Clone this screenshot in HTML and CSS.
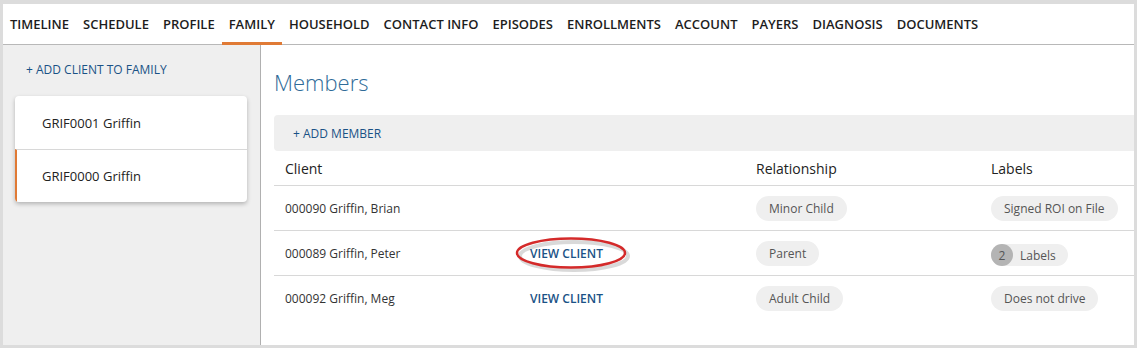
FILE: index.html
```html
<!DOCTYPE html>
<html lang="en">
<head>
  <meta charset="UTF-8">
  <title>Family - Members</title>
  <link rel="stylesheet" href="styles.css">
</head>
<body>
  <div class="frame">
    <!-- Top tabs -->
    <nav class="tabs">
      <a href="#" class="tab">TIMELINE</a>
      <a href="#" class="tab">SCHEDULE</a>
      <a href="#" class="tab">PROFILE</a>
      <a href="#" class="tab active">FAMILY</a>
      <a href="#" class="tab">HOUSEHOLD</a>
      <a href="#" class="tab">CONTACT INFO</a>
      <a href="#" class="tab">EPISODES</a>
      <a href="#" class="tab">ENROLLMENTS</a>
      <a href="#" class="tab">ACCOUNT</a>
      <a href="#" class="tab">PAYERS</a>
      <a href="#" class="tab">DIAGNOSIS</a>
      <a href="#" class="tab">DOCUMENTS</a>
    </nav>

    <div class="content">
      <!-- Families list -->
      <aside class="sidebar">
        <a href="#" class="link add-family">+ ADD CLIENT TO FAMILY</a>
        <div class="family-card">
          <div class="family-item">GRIF0001 Griffin</div>
          <div class="family-item selected">GRIF0000 Griffin</div>
        </div>
      </aside>

      <!-- Members -->
      <main class="main">
        <h1>Members</h1>
        <div class="toolbar">
          <a href="#" class="link">+ ADD MEMBER</a>
        </div>
        <div class="table">
          <div class="row head">
            <div class="cell c-client">Client</div>
            <div class="cell c-action"></div>
            <div class="cell c-rel">Relationship</div>
            <div class="cell c-labels">Labels</div>
          </div>
          <div class="row">
            <div class="cell c-client">000090 Griffin, Brian</div>
            <div class="cell c-action"></div>
            <div class="cell c-rel"><span class="pill">Minor Child</span></div>
            <div class="cell c-labels"><span class="pill">Signed ROI on File</span></div>
          </div>
          <div class="row">
            <div class="cell c-client">000089 Griffin, Peter</div>
            <div class="cell c-action">
              <a href="#" class="link view">VIEW CLIENT</a>
              <svg class="circled" width="124" height="44" viewBox="0 0 124 44">
                <ellipse cx="62" cy="24" rx="54" ry="14" fill="none" stroke="rgba(0,0,0,0.15)" stroke-width="4"/>
                <ellipse cx="59" cy="21" rx="54" ry="14.5" fill="none" stroke="#d42a2a" stroke-width="2.5"/>
              </svg>
            </div>
            <div class="cell c-rel"><span class="pill">Parent</span></div>
            <div class="cell c-labels"><span class="pill count"><span class="num">2</span>Labels</span></div>
          </div>
          <div class="row">
            <div class="cell c-client">000092 Griffin, Meg</div>
            <div class="cell c-action"><a href="#" class="link view">VIEW CLIENT</a></div>
            <div class="cell c-rel"><span class="pill">Adult Child</span></div>
            <div class="cell c-labels"><span class="pill">Does not drive</span></div>
          </div>
        </div>
      </main>
    </div>
  </div>
</body>
</html>
```

FILE: styles.css
```css
* {
  margin: 0;
  padding: 0;
  box-sizing: border-box;
  font-family: 'Open Sans', 'Noto Sans', sans-serif;
}
body {
  background: #dcdcdc;
  height: 348px;
  overflow: hidden;
}
.frame {
  margin: 4px 3px 0 3px;
  height: 341px;
  background: #fff;
  display: flex;
  flex-direction: column;
}
.tabs {
  height: 41px;
  display: flex;
  align-items: stretch;
  border-bottom: 1px solid #b8b8b8;
}
.tab {
  display: flex;
  align-items: center;
  padding: 2px 7px 0 7px;
  font-size: 13px;
  font-weight: 600;
  color: #1d1d1d;
  text-decoration: none;
  border-bottom: 3px solid transparent;
  margin-bottom: -1px;
}
.tab.active {
  border-bottom-color: #e07a35;
}
.content {
  flex: 1;
  display: flex;
}
.link {
  color: #1a5286;
  font-size: 12px;
  font-weight: 400;
  text-decoration: none;
}
.sidebar {
  width: 258px;
  background: #efefef;
  border-right: 1px solid #b0b0b0;
  padding: 15px 13px 0 12px;
}
.add-family {
  display: block;
  padding-left: 11px;
  line-height: 20px;
}
.family-card {
  margin-top: 16px;
  background: #fff;
  border-radius: 4px;
  box-shadow: 0 2px 4px rgba(0, 0, 0, 0.25);
  overflow: hidden;
}
.family-item {
  height: 53px;
  display: flex;
  align-items: center;
  padding-left: 27px;
  font-size: 13px;
  font-weight: 400;
  color: #222;
}
.family-item + .family-item {
  border-top: 1px solid #d8d8d8;
}
.family-item.selected {
  border-left: 2px solid #e07a35;
  padding-left: 25px;
}
.main {
  flex: 1;
  padding: 22px 0 0 13px;
}
h1 {
  font-size: 22px;
  font-weight: 300;
  color: #2f6b98;
  line-height: 30px;
  margin-bottom: 18px;
}
.toolbar {
  height: 36px;
  background: #efefef;
  border-radius: 4px 0 0 4px;
  display: flex;
  align-items: center;
  padding-left: 19px;
}
.row {
  display: flex;
  align-items: center;
  height: 45px;
  border-top: 1px solid #d8d8d8;
  font-size: 12px;
  color: #333;
}
.row.head {
  height: 34px;
  border-top: none;
  font-size: 14px;
  color: #222;
}
.cell {
  padding-left: 11px;
}
.c-client {
  width: 245px;
}
.c-action {
  width: 226px;
  position: relative;
}
.c-rel {
  width: 235px;
}
.c-labels {
  flex: 1;
}
.view {
  position: relative;
  z-index: 1;
  font-weight: 600;
}
.circled {
  position: absolute;
  left: -7px;
  top: -13px;
  pointer-events: none;
}
.pill {
  display: inline-flex;
  align-items: center;
  height: 25px;
  padding: 0 13px;
  border-radius: 13px;
  background: #efefef;
  color: #555;
  font-size: 12px;
}
.pill.count {
  height: 22px;
  padding: 0 12px 0 0;
  margin-top: 4px;
}
.num {
  width: 22px;
  height: 22px;
  border-radius: 50%;
  background: #b4b4b4;
  color: #555;
  display: inline-flex;
  align-items: center;
  justify-content: center;
  margin-right: 7px;
}
```
